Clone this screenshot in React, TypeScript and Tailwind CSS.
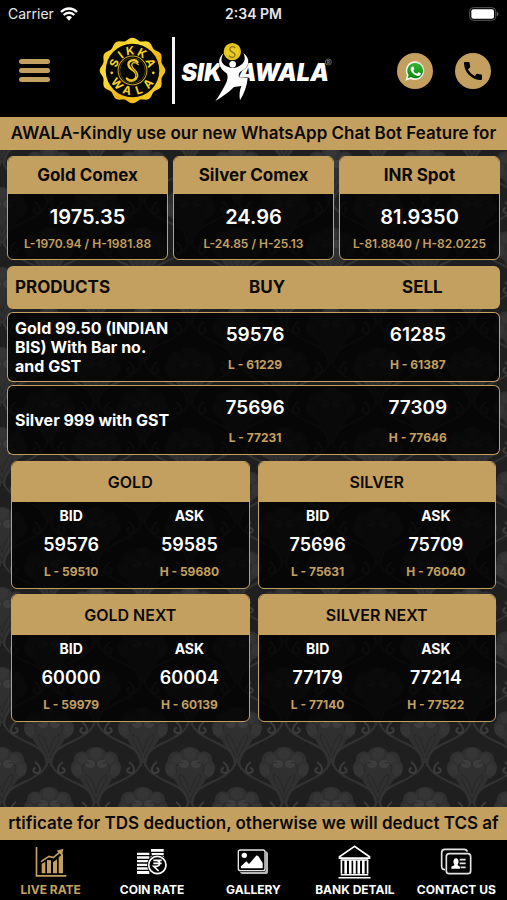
import React from 'react';
import { MdCall } from 'react-icons/md';

const spots = [
    { name: 'Gold Comex', price: '1975.35', low: '1970.94', high: '1981.88' },
    { name: 'Silver Comex', price: '24.96', low: '24.85', high: '25.13' },
    { name: 'INR Spot', price: '81.9350', low: '81.8840', high: '82.0225' },
];

const products = [
    { name: 'Gold 99.50 (INDIAN BIS) With Bar no. and GST', buy: '59576', low: '61229', sell: '61285', high: '61387' },
    { name: 'Silver 999 with GST', buy: '75696', low: '77231', sell: '77309', high: '77646' },
];

const futures = [
    { name: 'GOLD', bid: '59576', low: '59510', ask: '59585', high: '59680' },
    { name: 'SILVER', bid: '75696', low: '75631', ask: '75709', high: '76040' },
    { name: 'GOLD NEXT', bid: '60000', low: '59979', ask: '60004', high: '60139' },
    { name: 'SILVER NEXT', bid: '77179', low: '77140', ask: '77214', high: '77522' },
];

// Wavy outer edge of the coin seal
const sealEdge = Array.from({ length: 121 }, (_, i) => {
    const angle = (i / 120) * Math.PI * 2 - Math.PI / 2;
    const radius = 94 + 4 * Math.cos(12 * (angle + Math.PI / 2));
    return `${(100 + radius * Math.cos(angle)).toFixed(1)},${(100 + radius * Math.sin(angle)).toFixed(1)}`;
}).join(' ');

const sealLetters = [
    { char: 'S', turn: -68, y: 53 },
    { char: 'I', turn: -37, y: 53 },
    { char: 'K', turn: -7, y: 53 },
    { char: 'K', turn: 29, y: 53 },
    { char: 'A', turn: 67, y: 53 },
    { char: 'W', turn: 49, y: 173 },
    { char: 'A', turn: 15, y: 173 },
    { char: 'L', turn: -18, y: 173 },
    { char: 'A', turn: -50, y: 173 },
];

function Seal() {
    return (
        <svg viewBox="0 0 200 200" className="h-[67px] w-[67px]" role="img" aria-label="Sikkawala seal">
            <defs>
                <linearGradient id="sealGold" x1="0" y1="0" x2="1" y2="1">
                    <stop offset="0" stopColor="#f0b90f" />
                    <stop offset="0.35" stopColor="#fbe03a" />
                    <stop offset="0.6" stopColor="#eeb511" />
                    <stop offset="1" stopColor="#f9d92c" />
                </linearGradient>
            </defs>
            <polygon points={sealEdge} fill="url(#sealGold)" />
            <circle cx="100" cy="100" r="80" fill="#050500" />
            <circle cx="100" cy="100" r="43" fill="none" stroke="#c9a927" strokeWidth="3" />
            <circle cx="100" cy="100" r="38" fill="none" stroke="#6b5a14" strokeWidth="2" />
            <g fill="#f6d02a" fontFamily="Inter, sans-serif" fontWeight="700" fontSize="34" textAnchor="middle">
                {sealLetters.map((letter, i) => (
                    <text key={i} x="100" y={letter.y} transform={`rotate(${letter.turn} 100 100)`}>
                        {letter.char}
                    </text>
                ))}
            </g>
            <circle cx="38" cy="107" r="4" fill="#f6d02a" />
            <circle cx="162" cy="107" r="4" fill="#f6d02a" />
            <g fill="none" strokeLinecap="round">
                <path d="M115 75 C108 65 87 69 88 83 C89 98 113 99 112 116 C111 131 92 134 83 124" stroke="#f3cc2b" strokeWidth="7" />
                <path d="M117 82 C108 73 97 75 98 86 C100 98 120 102 115 119 C110 131 95 136 85 128" stroke="#e4bb24" strokeWidth="4" />
                <path d="M93 82 C94 97 115 101 112 118" stroke="#3a3007" strokeWidth="2" />
            </g>
        </svg>
    );
}

function Wordmark() {
    return (
        <svg viewBox="0 0 510 240" className="h-20 w-[170px]" role="img" aria-label="Sikkawala">
            <g fill="#fff" fontFamily="Inter, sans-serif" fontWeight="900" fontStyle="italic" fontSize="71">
                <text x="31" y="151">SIK</text>
                <text x="474" y="151" textAnchor="end">AWALA</text>
            </g>
            <path
                d="M158 66 C134 88 144 112 168 128 C173 142 166 156 158 170 C150 184 142 198 133 210 C160 194 180 178 189 168 L211 165 C206 178 204 192 207 208 C220 186 228 166 230 141 L204 139 C202 132 204 126 208 122 C236 108 240 84 217 66 C228 88 216 101 199 108 C190 112 180 112 172 108 C150 100 146 88 158 66Z"
                fill="#fff"
                stroke="#000"
                strokeWidth="2"
                paintOrder="stroke"
            />
            <circle cx="185" cy="100" r="10" fill="#fff" />
            <circle cx="184" cy="62" r="26" fill="#eccb22" />
            <circle cx="184" cy="62" r="21" fill="none" stroke="#d6b41c" strokeWidth="2" />
            <path d="M193 51 C185 43 174 48 177 57 C180 65 194 64 192 73 C190 81 179 81 174 74" fill="none" stroke="#8a7418" strokeWidth="4" />
            <circle cx="472" cy="93" r="9" fill="none" stroke="#8c8c8c" strokeWidth="2" />
            <text x="472" y="98" textAnchor="middle" fill="#8c8c8c" fontFamily="Inter, sans-serif" fontWeight="700" fontSize="13">R</text>
        </svg>
    );
}

function WhatsAppIcon() {
    return (
        <svg viewBox="0 0 60 60" className="h-5 w-5" aria-hidden="true">
            <defs>
                <linearGradient id="chatGreen" x1="0" y1="0" x2="0" y2="1">
                    <stop offset="0" stopColor="#35b535" />
                    <stop offset="1" stopColor="#07860d" />
                </linearGradient>
            </defs>
            <path d="M31 1 A28 28 0 1 1 17 54 L1 59 L6 43 A28 28 0 0 1 31 1Z" fill="#f4f6ec" />
            <path d="M31 6 A23 23 0 1 1 18 48 L8 52 L11 42 A23 23 0 0 1 31 6Z" fill="url(#chatGreen)" />
            <path
                d="M22 17 C25 16 26 17 28 24 C28 26 25 27 25 29 C27 33 31 37 36 38 C38 38 39 34 41 34 L47 37 C49 42 42 46 38 45 C28 43 18 34 17 25 C17 21 19 18 22 17Z"
                fill="#fff"
            />
        </svg>
    );
}

// Damask wallpaper behind the rate panels
function Damask() {
    return (
        <svg className="absolute inset-0 h-full w-full" aria-hidden="true">
            <defs>
                <g id="motif">
                    <g fill="#303030">
                        <path d="M47 38 C42 28 36 22 31 13 C22 10 19 0 25 -5 C24 -12 32 -17 37 -13 C40 -21 54 -21 57 -13 C62 -17 70 -12 69 -5 C75 0 72 10 63 13 C58 22 52 28 47 38Z" />
                    </g>
                    <g fill="#353535">
                        <circle cx="47" cy="-12" r="6" />
                        <circle cx="34" cy="-7" r="5" />
                        <circle cx="60" cy="-7" r="5" />
                        <ellipse cx="28" cy="4" rx="5" ry="6" />
                        <ellipse cx="66" cy="4" rx="5" ry="6" />
                    </g>
                    <g fill="#3d3d3d">
                        <ellipse cx="41" cy="-2" rx="5" ry="4" />
                        <ellipse cx="53" cy="-2" rx="5" ry="4" />
                    </g>
                    <g fill="none" stroke="#262626" strokeWidth="1">
                        <path d="M47 35 C43 22 34 14 37 8 C42 11 45 18 47 27 C49 18 52 11 57 8 C60 14 51 22 47 35" />
                        <path d="M34 6 C31 0 35 -5 40 -3 M60 6 C63 0 59 -5 54 -3" />
                    </g>
                    <g fill="none" stroke="#323232" strokeWidth="2">
                        <path d="M45 40 C44 20 30 20 15 11 C4 5 1 -1 1 -8" />
                        <path d="M49 40 C50 20 64 20 79 11 C90 5 93 -1 93 -8" />
                        <path d="M14 -4 C7 1 8 8 13 7 C17 6 16 2 13 2" stroke="#3b3b3b" />
                        <path d="M80 -4 C87 1 86 8 81 7 C77 6 78 2 81 2" stroke="#3b3b3b" />
                    </g>
                </g>
                <pattern id="damask" width="94" height="80" patternUnits="userSpaceOnUse" patternTransform="translate(2 6)">
                    <rect width="94" height="80" fill="#1f1f1f" />
                    <use href="#motif" x="0" y="10" />
                    <use href="#motif" x="0" y="90" />
                    <use href="#motif" x="-47" y="50" />
                    <use href="#motif" x="47" y="50" />
                    <use href="#motif" x="-47" y="-30" />
                    <use href="#motif" x="47" y="-30" />
                </pattern>
            </defs>
            <rect width="100%" height="100%" fill="url(#damask)" />
        </svg>
    );
}

function ChartIcon() {
    return (
        <svg viewBox="0 0 96 96" className="h-8 w-8" fill="currentColor" aria-hidden="true">
            <path d="M2 3 H7 V87 H94 V92 H2Z" />
            <path d="M20 54 L31 47 V82 H20Z M36 42 L48 43 V82 H36Z M54 49 L66 40 V82 H54Z M71 34 L84 23 V82 H71Z" />
            <path d="M18 47 L42 31 L55 35 L76 17" fill="none" stroke="currentColor" strokeWidth="5" />
            <path d="M65 14 L85 8 L81 29Z" />
        </svg>
    );
}

function CoinsIcon() {
    return (
        <svg viewBox="0 0 96 96" className="h-8 w-8" fill="currentColor" aria-hidden="true">
            <path d="M3 20 H40 V27 H3Z M3 31 H40 V38 H3Z M3 42 H40 V49 H3Z M3 53 H40 V60 H3Z M3 64 H40 V71 H3Z M3 75 H40 V84 H3Z" />
            <path d="M45 9 H83 V17 H45Z M47 21 H83 V28 H47Z M44 31 H84 V37 H44Z" />
            <circle cx="64" cy="57" r="31" fill="#000" />
            <circle cx="64" cy="57" r="26" fill="none" stroke="currentColor" strokeWidth="5" />
            <path d="M52 43 H77 M52 52 H77 M52 43 H61 C74 43 74 61 61 61 H53 L68 75" fill="none" stroke="currentColor" strokeWidth="5" />
        </svg>
    );
}

function GalleryIcon() {
    return (
        <svg viewBox="0 0 96 96" className="h-8 w-8" aria-hidden="true">
            <path d="M86 16 C91 16 93 19 93 23 V77 C93 82 91 84 86 84 H16 C12 84 10 82 9 78 H80 C84 78 86 76 86 72Z" fill="#b8b8b8" />
            <rect x="4" y="12" width="80" height="62" rx="6" fill="#000" stroke="#e8e8e8" strokeWidth="4" />
            <circle cx="22" cy="28" r="8" fill="#fff" />
            <path d="M12 67 V61 L28 46 L36 54 L57 30 C60 27 64 30 67 35 L77 51 V67Z" fill="#fff" />
        </svg>
    );
}

function BankIcon() {
    return (
        <svg viewBox="0 0 100 104" className="h-[34px] w-[33px]" fill="none" stroke="#fff" aria-hidden="true">
            <path d="M50 4 L4 36 V40 H96 V36Z" strokeWidth="5" />
            <path d="M10 46 V88 M90 46 V88" strokeWidth="5" />
            <path d="M23 46 V88 M37 46 V88 M50 46 V88 M63 46 V88 M77 46 V88" strokeWidth="8" />
            <path d="M8 46 H92 M8 91 H92 M1 100 H99" strokeWidth="5" />
        </svg>
    );
}

function ContactIcon() {
    return (
        <svg viewBox="0 0 96 96" className="h-8 w-8" fill="none" stroke="#e4e4e4" aria-hidden="true">
            <path d="M15 71 C7 71 5 68 5 61 V20 C5 13 8 10 15 10 H73 C78 10 81 13 82 17" strokeWidth="5" />
            <rect x="19" y="23" width="73" height="60" rx="9" strokeWidth="5" />
            <path d="M34 68 V62 L44 57 C39 53 38 38 48 37 C58 38 57 53 52 57 L60 62 V68Z" fill="#fff" stroke="none" />
            <path d="M59 41 H77 M59 52 H77 M62 64 H77" strokeWidth="5" />
        </svg>
    );
}

const tabs = [
    { label: 'LIVE RATE', icon: ChartIcon, active: true },
    { label: 'COIN RATE', icon: CoinsIcon, active: false },
    { label: 'GALLERY', icon: GalleryIcon, active: false },
    { label: 'BANK DETAIL', icon: BankIcon, active: false },
    { label: 'CONTACT US', icon: ContactIcon, active: false },
];

function Ticker({ text }: { text: string }) {
    return (
        <div className="relative bg-[#c4a060] px-[7px]">
            <p className="flex justify-center overflow-hidden text-[17px] leading-[33px] font-semibold whitespace-nowrap text-[#0c0a06]">
                {text}
            </p>
        </div>
    );
}

function StatusBar() {
    return (
        <div className="grid h-7 grid-cols-3 items-center px-2 text-sm text-gray-200">
            <div className="flex items-center gap-1.5">
                <span>Carrier</span>
                <svg viewBox="0 0 54 42" className="h-3.5 w-[18px]" aria-hidden="true">
                    <path d="M3 15 C17 1 37 1 51 15 M11 24 C20 15 34 15 43 24" fill="none" stroke="#fff" strokeWidth="7" />
                    <path d="M18 31 C23 26 31 26 36 31 L27 41Z" fill="#fff" />
                </svg>
            </div>
            <span className="text-center font-semibold">2:34 PM</span>
            <svg viewBox="0 0 90 42" className="h-3.5 w-[30px] justify-self-end" aria-hidden="true">
                <rect x="2" y="2" width="78" height="38" rx="11" fill="none" stroke="#5a5a5a" strokeWidth="3" />
                <rect x="7" y="7" width="68" height="28" rx="6" fill="#fff" />
                <path d="M83 14 C90 16 90 26 83 28Z" fill="#5a5a5a" />
            </svg>
        </div>
    );
}

export default function App() {
    return (
        <div className="flex min-h-screen flex-col bg-black font-['Inter','Liberation_Sans',sans-serif] text-white">
            <StatusBar />

            <header className="flex h-[89px] items-center justify-between pr-4 pb-1 pl-[19px]">
                <button aria-label="Menu" className="flex w-8 flex-col gap-1">
                    <span className="h-[5px] w-[31px] rounded-full bg-[#c4a060]" />
                    <span className="h-[5px] w-[31px] rounded-full bg-[#c4a060]" />
                    <span className="h-[5px] w-[31px] rounded-full bg-[#c4a060]" />
                </button>
                <a href="#" className="mr-2 flex items-center">
                    <Seal />
                    <span className="ml-1.5 h-[67px] w-[3px] bg-gray-100" />
                    <span className="-ml-1">
                        <Wordmark />
                    </span>
                </a>
                <div className="flex items-center gap-[22px]">
                    <a href="#" aria-label="WhatsApp" className="flex h-9 w-9 items-center justify-center rounded-full bg-[#c4a060]">
                        <WhatsAppIcon />
                    </a>
                    <a href="#" aria-label="Call" className="flex h-9 w-9 items-center justify-center rounded-full bg-[#c4a060] text-black">
                        <MdCall className="h-6 w-6" />
                    </a>
                </div>
            </header>

            <Ticker text="AWALA-Kindly use our new WhatsApp Chat Bot Feature for" />

            <main className="relative flex-1 overflow-hidden">
                <Damask />
                <div className="relative px-[7px] pt-1.5 pb-5">
                    {/* Spot rates */}
                    <div className="grid grid-cols-3 gap-[5px]">
                        {spots.map((spot) => (
                            <section key={spot.name} className="overflow-hidden rounded-md border border-[#c4a060] bg-black/80 text-center">
                                <h2 className="bg-[#c4a060] text-[17px] leading-[37px] font-bold text-[#0c0a06]">{spot.name}</h2>
                                <p className="pt-[9px] text-xl leading-7 font-semibold">{spot.price}</p>
                                <p className="pt-[5px] pb-[7px] text-xs leading-4 font-semibold whitespace-nowrap text-[#c4a060]">
                                    L-{spot.low} / H-{spot.high}
                                </p>
                            </section>
                        ))}
                    </div>

                    {/* Products */}
                    <table className="mt-[3px] w-full table-fixed border-separate border-spacing-x-0 border-spacing-y-[3px]">
                        <thead>
                            <tr className="h-[43px] text-[17px] text-[#0c0a06]">
                                <th className="w-[37%] rounded-l-md bg-[#c4a060] pl-2 text-left font-bold">PRODUCTS</th>
                                <th className="bg-[#c4a060] font-bold">BUY</th>
                                <th className="rounded-r-md bg-[#c4a060] font-bold">SELL</th>
                            </tr>
                        </thead>
                        <tbody>
                            {products.map((product) => (
                                <tr key={product.name} className="h-[70px] text-center">
                                    <td className="rounded-l-md border-y border-l border-[#c4a060] bg-black/80 pr-4 pl-[7px] text-left text-base leading-[19px] font-bold">
                                        {product.name}
                                    </td>
                                    <td className="border-y border-[#c4a060] bg-black/80 pr-6">
                                        <p className="text-[19px] leading-7 font-semibold">{product.buy}</p>
                                        <p className="pt-2 text-xs leading-4 font-bold text-[#c4a060]">L - {product.low}</p>
                                    </td>
                                    <td className="rounded-r-md border-y border-r border-[#c4a060] bg-black/80 pr-2">
                                        <p className="text-[19px] leading-7 font-semibold">{product.sell}</p>
                                        <p className="pt-2 text-xs leading-4 font-bold text-[#c4a060]">H - {product.high}</p>
                                    </td>
                                </tr>
                            ))}
                        </tbody>
                    </table>

                    {/* Futures */}
                    <div className="mt-[3px] grid grid-cols-2 gap-x-2 gap-y-[5px] px-1">
                        {futures.map((item) => (
                            <section key={item.name} className="overflow-hidden rounded-md border border-[#c4a060] bg-black/80 text-center">
                                <h2 className="bg-[#c4a060] text-base leading-10 font-semibold text-[#0c0a06]">{item.name}</h2>
                                <div className="grid grid-cols-2 pt-1 pb-2">
                                    <div>
                                        <h3 className="text-sm leading-5 font-bold">BID</h3>
                                        <p className="pt-[5px] text-lg leading-7 font-semibold">{item.bid}</p>
                                        <p className="pt-[5px] text-xs leading-4 font-bold text-[#c4a060]">L - {item.low}</p>
                                    </div>
                                    <div>
                                        <h3 className="text-sm leading-5 font-bold">ASK</h3>
                                        <p className="pt-[5px] text-lg leading-7 font-semibold">{item.ask}</p>
                                        <p className="pt-[5px] text-xs leading-4 font-bold text-[#c4a060]">H - {item.high}</p>
                                    </div>
                                </div>
                            </section>
                        ))}
                    </div>
                </div>
            </main>

            <Ticker text="rtificate for TDS deduction, otherwise we will deduct TCS af" />

            <nav className="grid h-[60px] grid-cols-5">
                {tabs.map((tab) => (
                    <a
                        key={tab.label}
                        href="#"
                        className={`flex flex-col items-center justify-end pb-0.5 ${tab.active ? 'text-[#c4a060]' : 'text-white'}`}
                    >
                        <span className="flex h-10 items-center justify-center">
                            <tab.icon />
                        </span>
                        <span className="text-xs leading-4 font-bold whitespace-nowrap">{tab.label}</span>
                    </a>
                ))}
            </nav>
        </div>
    );
}
